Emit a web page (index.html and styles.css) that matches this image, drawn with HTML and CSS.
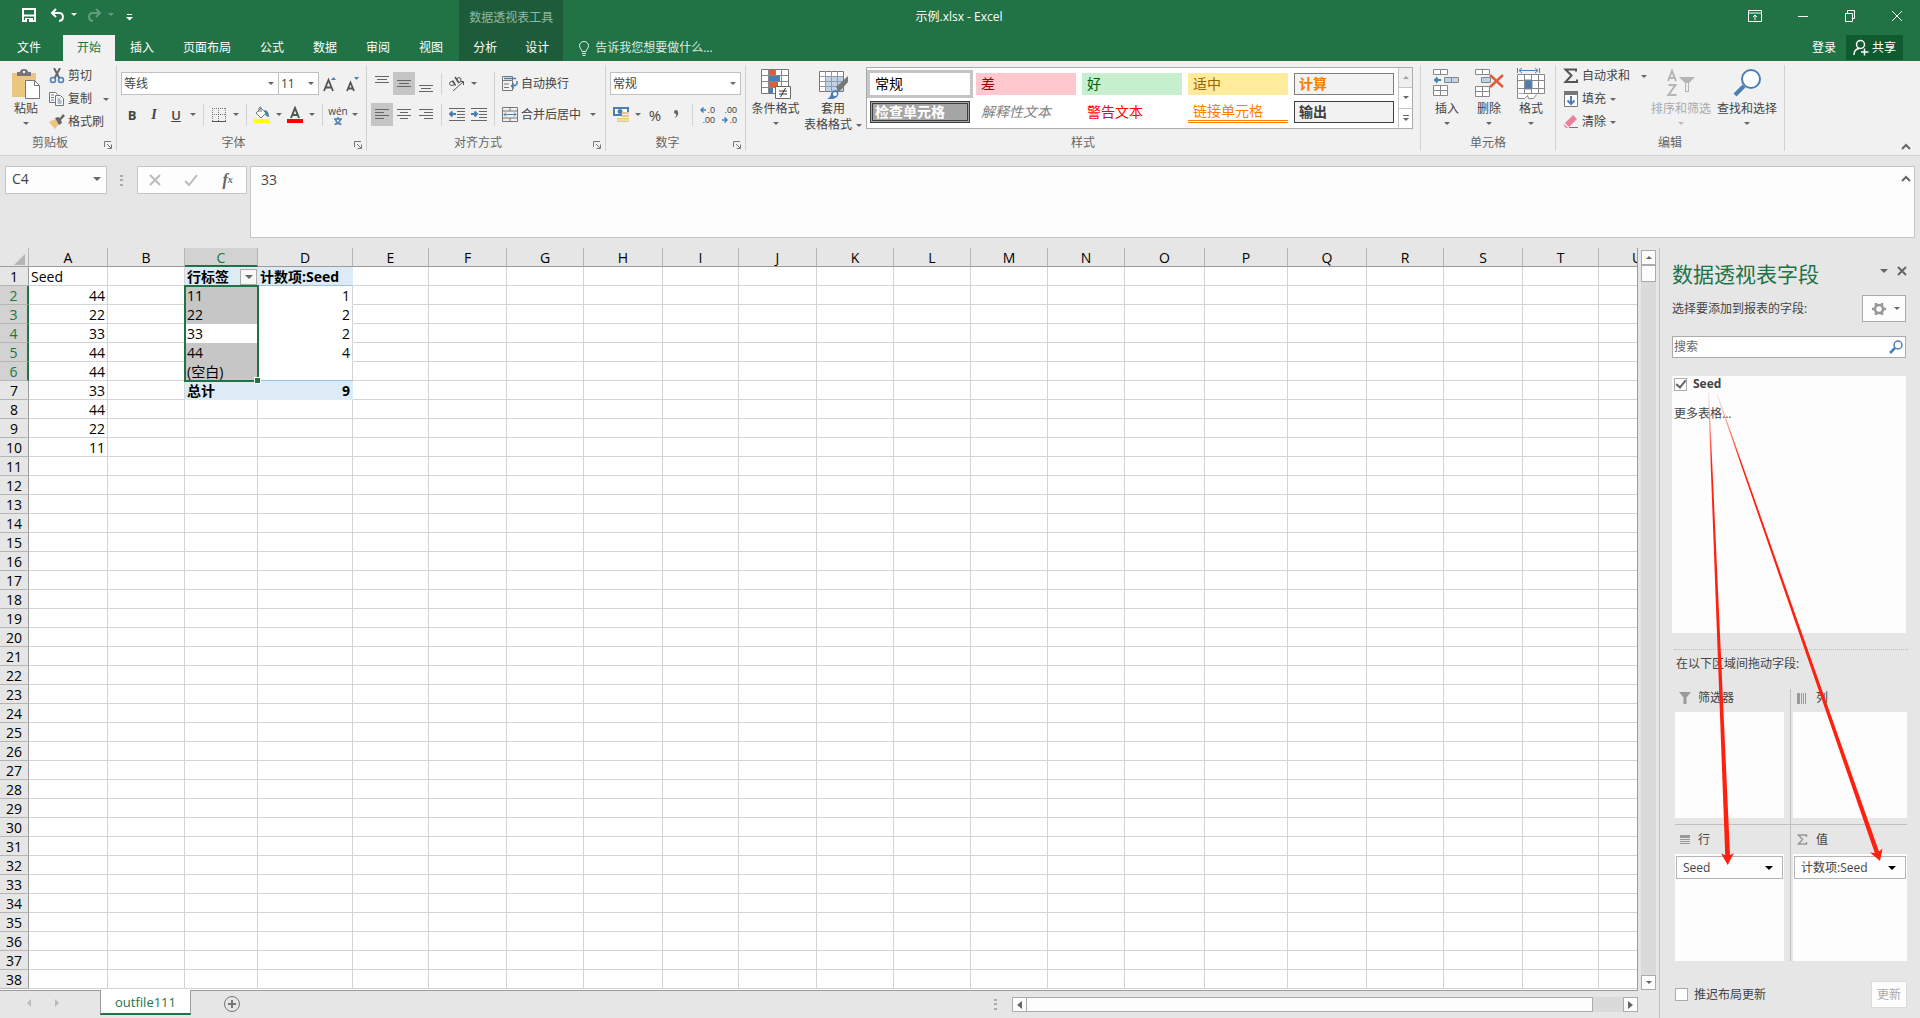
FILE: index.html
```html
<!DOCTYPE html>
<html lang="zh-CN">
<head>
<meta charset="utf-8">
<title>示例.xlsx - Excel</title>
<link rel="stylesheet" href="styles.css">
</head>
<body>
<header class="top">
  <div class="titlebar">
    <div class="quick">
      <button class="plain" aria-label="保存"><svg width="14" height="14"><path d="M1 1h12v12H1z" fill="none" stroke="#fff" stroke-width="2"/><path d="M1 6.500h12v2H1zM3 10h8v4H3z" fill="#fff"/><path d="M5 11h2v3H5z" fill="#217346"/></svg></button>
      <button class="plain undo" aria-label="撤销"><svg width="15" height="14"><path d="M6 1L2 5l4 4M2.500 5H9c5 0 5.500 7.500 0 8" fill="none" stroke="#fff" stroke-width="2"/></svg></button>
      <i class="caret light"></i>
      <button class="plain redo" aria-label="重做"><svg width="15" height="14"><path d="M9 1l4 4-4 4M12.500 5H6c-5 0-5.500 7.500 0 8" fill="none" stroke="#fff" stroke-width="2"/></svg></button>
      <i class="caret light dim"></i>
      <button class="plain custom" aria-label="自定义快速访问工具栏"><svg width="7" height="7"><path d="M1 .5h5" stroke="#fff"/><path d="M0 3h7L3.500 6.500z" fill="#fff"/></svg></button>
    </div>
    <h1>示例.xlsx - Excel</h1>
    <div class="window">
      <button class="plain" aria-label="功能区显示选项"><svg width="14" height="12" fill="none" stroke="#fff"><path d="M.5.5h13v11H.5zM.5 3h13M7 10V5M5 7l2-2 2 2"/></svg></button>
      <button class="plain" aria-label="最小化"><svg width="12" height="12"><path d="M1 6.500h10" stroke="#fff"/></svg></button>
      <button class="plain" aria-label="还原"><svg width="12" height="12" fill="none" stroke="#fff"><path d="M1.500 3.500h7v8h-7zM3.500 3V.5h7v8H9"/></svg></button>
      <button class="plain" aria-label="关闭"><svg width="12" height="12"><path d="M1 1l10 10M11 1L1 11" stroke="#fff"/></svg></button>
    </div>
  </div>
  <nav class="tabs">
    <button class="tab file">文件</button>
    <button class="tab active">开始</button>
    <button class="tab">插入</button>
    <button class="tab">页面布局</button>
    <button class="tab">公式</button>
    <button class="tab">数据</button>
    <button class="tab">审阅</button>
    <button class="tab">视图</button>
    <div class="context">
      <span class="context-title">数据透视表工具</span>
      <div class="context-tabs"><button class="tab">分析</button><button class="tab">设计</button></div>
    </div>
    <button class="plain tell"><svg width="10" height="15" fill="none" stroke="#e4efe8"><path d="M3 10.500C3 8.500.5 7.500.5 4.700a4.500 4.200 0 0 1 9 0C9.500 7.500 7 8.500 7 10.500zM3 12.500h4M3.500 14.500h3"/></svg>告诉我您想要做什么...</button>
    <button class="plain login">登录</button>
    <button class="share"><svg width="16" height="17" fill="none" stroke="#fff" stroke-width="1.500"><circle cx="7.500" cy="5.500" r="4"/><path d="M1 16c0-4 2-6 5-6.500M11.500 9.500v7M8 13h7.500"/></svg>共享</button>
  </nav>
</header>

<section class="ribbon">
  <div class="group clipboard">
    <div class="body">
      <button class="big"><svg width="30" height="30"><path d="M1 4h24v24H1z" fill="#ecc57f"/><path d="M6 3h3q0-3 4-3t4 3h3v4H6z" fill="#777"/><path d="M12 2h2v2h-2z" fill="#fff"/><path d="M14.500 11.500h9l5 5v13h-14z" fill="#fff" stroke="#777"/><path d="M23.500 11.500v5h5" fill="none" stroke="#777"/></svg><span>粘贴</span><i class="caret"></i></button>
      <div class="stack">
        <button class="small"><svg width="16" height="16" fill="none"><path d="M5 0l5.500 10.500M11 0L5.500 10.500" stroke="#666" stroke-width="2"/><circle cx="4" cy="12" r="2.500" stroke="#4a7fb5" stroke-width="1.500"/><circle cx="12" cy="12" r="2.500" stroke="#4a7fb5" stroke-width="1.500"/></svg>剪切</button>
        <button class="small"><svg width="16" height="16" fill="#fff" stroke="#777"><path d="M.5 1.500h6l2 2v8h-8z"/><path d="M6.500 4.500h5l3 3v7h-8z"/><path d="M2 4h3M2 6.500h3M2 9h3M8.500 8h3M8.500 10h4M8.500 12h4" stroke="#4a7fb5"/></svg>复制<i class="caret far"></i></button>
        <button class="small"><svg width="16" height="16"><path d="M0 8l6-3 4 5-4 5z" fill="#ecc57f"/><path d="M6 4l3-1 2 1 3-4 2 2-4 4 1 3-3 2z" fill="#666"/></svg>格式刷</button>
      </div>
    </div>
    <div class="label"><span>剪贴板</span><button class="plain launcher" aria-label="剪贴板选项"><svg width="8" height="8" fill="none" stroke="#777"><path d="M.5 6V.5H7M3 3l4 4M7.500 3.500v4h-4"/></svg></button></div>
  </div>

  <div class="group font">
    <div class="body rows">
      <div class="row">
        <label class="combo family"><select aria-label="字体"><option>等线</option></select><i class="caret"></i></label>
        <label class="combo size"><select aria-label="字号"><option>11</option></select><i class="caret"></i></label>
        <button class="ib" aria-label="增大字号"><svg width="16" height="16"><path d="M2 15L6.500 4 11 15M3.500 11.500h6" fill="none" stroke="#555" stroke-width="1.800"/><path d="M9 4l2.500-3L14 4z" fill="#4a7fb5"/></svg></button>
        <button class="ib" aria-label="减小字号"><svg width="16" height="16"><path d="M3 15L6.500 6.500 10 15M4 12.500h5" fill="none" stroke="#555" stroke-width="1.800"/><path d="M10 1l2.500 3L15 1z" fill="#4a7fb5"/></svg></button>
      </div>
      <div class="row">
        <button class="ib bold">B</button><button class="ib italic">I</button><button class="ib underline">U</button><button class="drop" aria-label="下划线选项"><i class="caret"></i></button>
        <span class="sep"></span>
        <button class="ib" aria-label="边框"><svg width="14" height="14" stroke="#777" fill="none"><path d="M.5 0v13M13.500 0v13M6.500 0v13M0 .5h14M0 6.500h14" stroke-dasharray="1 1"/><path d="M0 13.500h14" stroke="#555"/></svg></button><button class="drop" aria-label="边框选项"><i class="caret"></i></button>
        <span class="sep"></span>
        <button class="ib" aria-label="填充颜色"><svg width="18" height="18"><path d="M3 7l5-5 5 5-5 5z" fill="#fff" stroke="#777"/><path d="M6 6V2q2-3 2 1v3" fill="none" stroke="#777"/><path d="M11 4q5 0 5 7l-3-1z" fill="#4a7fb5"/><path d="M1 13h16v4H1z" fill="#ff0"/></svg></button><button class="drop" aria-label="填充颜色选项"><i class="caret"></i></button>
        <button class="ib" aria-label="字体颜色"><svg width="18" height="18"><path d="M5 12L9 2l4 10M6 9h6" fill="none" stroke="#555" stroke-width="2"/><path d="M1 13h16v4H1z" fill="#f00"/></svg></button><button class="drop" aria-label="字体颜色选项"><i class="caret"></i></button>
        <span class="sep"></span>
        <button class="ib pinyin"><span>wén</span><svg width="8" height="8" fill="none" stroke="#4a7fb5" stroke-width="1.500"><path d="M4 0v1.500M0 2h8M1.500 2.500q1 4 6 5M6.500 2.500q-1 4-6 5"/></svg></button><button class="drop" aria-label="拼音选项"><i class="caret"></i></button>
      </div>
    </div>
    <div class="label"><span>字体</span><button class="plain launcher" aria-label="字体选项"><svg width="8" height="8" fill="none" stroke="#777"><path d="M.5 6V.5H7M3 3l4 4M7.500 3.500v4h-4"/></svg></button></div>
  </div>

  <div class="group align">
    <div class="body">
      <div class="rows">
        <div class="row">
          <button class="ib" aria-label="顶端对齐"><svg width="14" height="16" stroke="#666"><path d="M0 .5h14M2 3.500h10M0 6.500h14"/></svg></button>
          <button class="ib on" aria-label="垂直居中"><svg width="14" height="16" stroke="#666"><path d="M0 4.500h14M2 7.500h10M0 10.500h14"/></svg></button>
          <button class="ib" aria-label="底端对齐"><svg width="14" height="16" stroke="#666"><path d="M0 9.500h14M2 12.500h10M0 15.500h14"/></svg></button>
          <span class="sep"></span>
          <button class="ib" aria-label="方向"><svg width="18" height="16" fill="none" stroke="#555"><ellipse cx="4" cy="7.500" rx="2.500" ry="2"/><path d="M4.500 4.500l3 5M7 1l4 6" stroke-width="1.500"/><ellipse cx="11" cy="4" rx="2" ry="2.500"/><path d="M5 15L15 6M12 5.500h3.500V9"/></svg></button><button class="drop" aria-label="方向选项"><i class="caret"></i></button>
        </div>
        <div class="row">
          <button class="ib on" aria-label="左对齐"><svg width="14" height="11" stroke="#666"><path d="M0 .5h14M0 3.500h9M0 6.500h14M0 9.500h9"/></svg></button>
          <button class="ib" aria-label="居中"><svg width="14" height="11" stroke="#666"><path d="M0 .5h14M3 3.500h8M0 6.500h14M3 9.500h8"/></svg></button>
          <button class="ib" aria-label="右对齐"><svg width="14" height="11" stroke="#666"><path d="M0 .5h14M5 3.500h9M0 6.500h14M5 9.500h9"/></svg></button>
          <span class="sep"></span>
          <button class="ib" aria-label="减少缩进量"><svg width="16" height="13" stroke="#666"><path d="M0 .5h16M8 3.500h8M8 6.500h8M8 9.500h8M0 12.500h16"/><path d="M7 6H1M3.500 3.500L1 6l2.500 2.500" fill="none" stroke="#4a7fb5" stroke-width="2"/></svg></button>
          <button class="ib" aria-label="增加缩进量"><svg width="16" height="13" stroke="#666"><path d="M0 .5h16M8 3.500h8M8 6.500h8M8 9.500h8M0 12.500h16"/><path d="M0 6h6M3.500 3.500L6 6 3.500 8.500" fill="none" stroke="#4a7fb5" stroke-width="2"/></svg></button>
        </div>
      </div>
      <span class="sep tall"></span>
      <div class="rows">
        <button class="small"><svg width="16" height="16" fill="none" stroke="#777"><path d="M.5.500h10v4H.5zM.5 4.500h10v10H.5zM2 8h5M2 11.500h5"/><path d="M2 2.500h12M15 5v2q0 3-5 3M12 7.500L9.500 10l2.500 2.500" stroke="#4a7fb5" stroke-width="1.500"/></svg>自动换行</button>
        <button class="small"><svg width="16" height="15" fill="none" stroke="#777"><path d="M.5.5h15v14H.5zM.5 4h15M.5 11h15M8 0v4M8 11v4"/><path d="M2 7.500h12M4 5.500l-2 2 2 2M12 5.500l2 2-2 2" stroke="#4a7fb5"/></svg>合并后居中<i class="caret mid"></i></button>
      </div>
    </div>
    <div class="label"><span>对齐方式</span><button class="plain launcher" aria-label="对齐选项"><svg width="8" height="8" fill="none" stroke="#777"><path d="M.5 6V.5H7M3 3l4 4M7.500 3.500v4h-4"/></svg></button></div>
  </div>

  <div class="group number">
    <div class="body rows">
      <label class="combo format"><select aria-label="数字格式"><option>常规</option></select><i class="caret"></i></label>
      <div class="row">
        <button class="ib" aria-label="会计数字格式"><svg width="16" height="16"><path d="M0 0h16v9H0z" fill="#4a7fb5"/><path d="M2 2h12v5H2z" fill="#fff"/><circle cx="7" cy="4.500" r="2.500" fill="#4a7fb5"/><path d="M9 5h7v10H4v-4h5z" fill="#ecc57f"/><path d="M9 7.500h7M9 10.500h7M4 13h12" stroke="#f1f1f1"/></svg></button><button class="drop" aria-label="货币选项"><i class="caret"></i></button>
        <button class="ib percent">%</button><button class="ib" aria-label="千位分隔样式"><svg width="6" height="9"><path d="M1 2a2 2 0 0 1 4 0q1 4-3.500 6Q4 5.500 3 4 1 4 1 2z" fill="#666"/></svg></button>
        <span class="sep"></span>
        <button class="ib decimals" aria-label="增加小数位数"><span><svg width="6" height="6" fill="none" stroke="#4a7fb5" stroke-width="1.500"><path d="M6 3H1M3.500 .5L1 3l2.500 2.500"/></svg>.0</span><span>.00</span></button>
        <button class="ib decimals" aria-label="减少小数位数"><span>.00</span><span><svg width="6" height="6" fill="none" stroke="#4a7fb5" stroke-width="1.500"><path d="M0 3h5M2.500 .5L5 3 2.500 5.500"/></svg>.0</span></button>
      </div>
    </div>
    <div class="label"><span>数字</span><button class="plain launcher" aria-label="数字选项"><svg width="8" height="8" fill="none" stroke="#777"><path d="M.5 6V.5H7M3 3l4 4M7.500 3.500v4h-4"/></svg></button></div>
  </div>

  <div class="group styles">
    <div class="body">
      <button class="big"><svg width="30" height="30"><path d="M.5.5h27v24H.5z" fill="#fff" stroke="#777"/><path d="M8 1h6v5H8zM8 13h9v5H8z" fill="#d9603b"/><path d="M8 7h11v5H8zM8 19h4v5H8z" fill="#4a7fb5"/><path d="M.5 6.500h27M.5 12.500h27M.5 18.500h27M7.500 0v25M14.500 0v7M20.500 0v25" fill="none" stroke="#888"/><path d="M14.500 17.500h15v12h-15z" fill="#fff" stroke="#666"/><path d="M18 22h8M18 25h8M24.500 19l-5 9" stroke="#333" fill="none"/></svg><span>条件格式</span><i class="caret"></i></button>
      <button class="big wide"><svg width="28" height="30"><path d="M.5 2.500h24v20H.5z" fill="#fff" stroke="#777"/><path d="M7 8h17v14H7z" fill="#bdd3ec"/><path d="M.5 7.500h24M.5 12.500h24M.5 17.500h24M6.500 2v21M12.500 2v21M18.500 2v21" fill="none" stroke="#999"/><path d="M17 18L29 7v6l-9 10z" fill="#777"/><path d="M8 30q4-2 4-6 3-5 7-2 2 6-5 8z" fill="#4a7fb5"/><circle cx="16" cy="25" r="2" fill="#fff"/></svg><span>套用</span><span class="second">表格格式<i class="caret"></i></span></button>
      <div class="gallery">
        <div class="swatches">
          <button class="sw normal">常规</button><button class="sw bad">差</button><button class="sw good">好</button><button class="sw neutral">适中</button><button class="sw calc">计算</button>
          <button class="sw verify">检查单元格</button><button class="sw explain">解释性文本</button><button class="sw warn">警告文本</button><button class="sw linked">链接单元格</button><button class="sw output">输出</button>
        </div>
        <div class="gallery-scroll">
          <button aria-label="上一行" disabled><i class="caret up"></i></button>
          <button aria-label="下一行"><i class="caret"></i></button>
          <button aria-label="其他"><i class="bar"></i><i class="caret"></i></button>
        </div>
      </div>
    </div>
    <div class="label"><span>样式</span></div>
  </div>

  <div class="group cells">
    <div class="body">
      <button class="big"><svg width="30" height="30" fill="#fff" stroke="#888"><path d="M1.500 .5h14v5h-14zM8.500 .5v5M1.500 16.500h14v10h-14zM8.500 16.500v10M1.500 21.500h14"/><path d="M12.500 8.500h14v5h-14zM19.500 8.500v5" fill="#bdd3ec"/><path d="M9 11H3M5.500 8.500L3 11 5.500 13.500" fill="none" stroke="#4a7fb5" stroke-width="2"/></svg><span>插入</span><i class="caret"></i></button>
      <button class="big"><svg width="30" height="30" fill="#fff" stroke="#888"><path d="M1.500 .5h14v5h-14zM8.500 .5v5M1.500 17.500h14v10h-14zM8.500 17.500v10M1.500 22.500h14"/><path d="M7.500 8.500h9v5h-9z" fill="#bdd3ec"/><path d="M16 6l13 12M29 6L16 18" stroke="#d9603b" stroke-width="2.500"/></svg><span>删除</span><i class="caret"></i></button>
      <button class="big"><svg width="30" height="30" fill="#fff" stroke="#888"><path d="M1.500 5.500h27v19h-27zM1.500 11.500h27M1.500 19.500h27M8.500 5.500v19M15.500 5.500v19M22.500 5.500v19"/><path d="M9 11h7v9H9z" fill="#4a7fb5"/><path d="M1.500 24.500v5h7l3-3 1 3h5l3-4"/><path d="M1.500-1v5M23.500-1v5M3 1.500h19M6-1L3 1.500 6 4M19-1l3 2.500L19 4" stroke="#4a7fb5" fill="none"/></svg><span>格式</span><i class="caret"></i></button>
    </div>
    <div class="label"><span>单元格</span></div>
  </div>

  <div class="group editing">
    <div class="body">
      <div class="stack">
        <button class="small"><svg width="16" height="16"><path d="M13 3.500V1.500H2.500L8.500 7.500l-6 6.500H14v-2.500" fill="none" stroke="#555" stroke-width="2"/></svg>自动求和<i class="caret far"></i></button>
        <button class="small"><svg width="16" height="16"><path d="M1.500.5h13v15h-13z" fill="#fff" stroke="#777"/><path d="M1 0h14v4H1z" fill="#777"/><path d="M8 5v8M4.500 9.500L8 13l3.500-3.500" fill="none" stroke="#4a7fb5" stroke-width="2"/></svg>填充<i class="caret near"></i></button>
        <button class="small"><svg width="16" height="16"><path d="M2 9L10 1l4 4-8 8z" fill="#e8819a"/><path d="M1 10l4 4H3l-2-2z" fill="#e8819a"/><path d="M6 13.500h9" stroke="#777"/></svg>清除<i class="caret near"></i></button>
      </div>
      <button class="big sort" disabled><svg width="30" height="30" fill="none" stroke="#b5b5b5" stroke-width="2"><path d="M2 12L6 2l4 10M3.500 9h5M2.500 16h7l-7 10h8"/><path d="M13 8h16l-6 6v9h-4v-9z" fill="#b5b5b5" stroke="none"/><path d="M21 14v8" stroke="#eee"/></svg><span>排序和筛选</span><i class="caret"></i></button>
      <button class="big find"><svg width="30" height="30" fill="none" stroke="#4a7fb5"><circle cx="19" cy="10" r="9" stroke-width="2" fill="#fff"/><path d="M12 17L3 26" stroke-width="4"/></svg><span>查找和选择</span><i class="caret"></i></button>
    </div>
    <div class="label"><span>编辑</span></div>
  </div>
  <button class="plain collapse" aria-label="折叠功能区"><svg width="10" height="8"><path d="M1 6l4-4 4 4" fill="none" stroke="#666" stroke-width="2"/></svg></button>
</section>

<section class="formula">
  <div class="namebox"><input aria-label="名称框" value="C4"><i class="caret big-caret"></i></div>
  <span class="dots"></span>
  <div class="fx">
    <button class="plain" aria-label="取消"><svg width="12" height="12"><path d="M1 1l10 10M11 1L1 11" stroke="#bbb" stroke-width="2"/></svg></button>
    <button class="plain" aria-label="输入"><svg width="14" height="12"><path d="M1 7l4 4 8-10" fill="none" stroke="#bbb" stroke-width="2"/></svg></button>
    <button class="plain fn">f<sub>x</sub></button>
  </div>
  <div class="entry">
    <textarea aria-label="编辑栏">33</textarea>
    <button class="plain" aria-label="折叠编辑栏"><svg width="10" height="8"><path d="M1 6l4-4 4 4" fill="none" stroke="#666" stroke-width="2"/></svg></button>
  </div>
</section>

<main>
  <div class="workbook">
    <div class="sheet-row">
      <div class="sheet">
        <table id="grid"></table>
        <div class="selection"></div>
      </div>
      <div class="vscroll">
        <button aria-label="向上滚动"><i class="caret up"></i></button>
        <div class="thumb"></div>
        <button class="end" aria-label="向下滚动"><i class="caret"></i></button>
      </div>
    </div>
    <footer class="bottom">
      <button class="plain nav" aria-label="上一个工作表"><svg width="6" height="8"><path d="M5 0v8L1 4z" fill="#bbb"/></svg></button>
      <button class="plain nav" aria-label="下一个工作表"><svg width="6" height="8"><path d="M1 0v8l4-4z" fill="#bbb"/></svg></button>
      <button class="sheet-tab">outfile111</button>
      <button class="plain add" aria-label="新工作表"><svg width="16" height="16" fill="none" stroke="#777"><circle cx="8" cy="8" r="7.500"/><path d="M8 4v8M4 8h8" stroke-width="2"/></svg></button>
      <span class="dots"></span>
      <div class="hscroll">
        <button aria-label="向左滚动"><svg width="5" height="8"><path d="M5 0v8L0 4z" fill="#666"/></svg></button>
        <div class="thumb"></div>
        <button class="end" aria-label="向右滚动"><svg width="5" height="8"><path d="M0 0v8l5-4z" fill="#666"/></svg></button>
      </div>
    </footer>
  </div>

  <aside class="pane">
    <div class="pane-head"><h2>数据透视表字段</h2><button class="plain" aria-label="任务窗格选项"><i class="caret big-caret"></i></button><button class="plain" aria-label="关闭窗格"><svg width="10" height="10"><path d="M1 1l8 8M9 1L1 9" stroke="#666" stroke-width="2"/></svg></button></div>
    <div class="pane-sub"><span>选择要添加到报表的字段:</span><button class="gear" aria-label="工具"><svg width="14" height="14" fill="none" stroke="#999"><circle cx="7" cy="7" r="4" stroke-width="2.500"/><path d="M4 1v3M10 1v3M4 10v3M10 10v3M0 7h3M11 7h3" stroke-width="2.500"/></svg><i class="caret"></i></button></div>
    <div class="search"><input type="text" aria-label="搜索" placeholder="搜索"><svg width="14" height="14" fill="none" stroke="#4a7fb5"><circle cx="9" cy="5" r="4" stroke-width="1.500"/><path d="M6 8l-5 5" stroke-width="2.500"/></svg></div>
    <div class="fields">
      <label class="check strong"><input type="checkbox" checked>Seed</label>
      <a href="#">更多表格...</a>
    </div>
    <p class="hint">在以下区域间拖动字段:</p>
    <div class="areas">
      <section class="area left">
        <h3><svg width="12" height="12"><path d="M0 0h12L7.500 5.500V12h-3V5.500z" fill="#999"/></svg>筛选器</h3>
        <div class="well"></div>
      </section>
      <section class="area right">
        <h3><svg width="12" height="11"><path d="M0 0h3v11H0zM4 0h1v11H4zM6 0h1v11H6zM8 0h1v11H8z" fill="#999"/></svg>列</h3>
        <div class="well"></div>
      </section>
      <section class="area left lower">
        <h3><svg width="12" height="10"><path d="M1 0h10v3H1zM1 4h10v1H1zM1 6h10v1H1zM1 8h10v1H1z" fill="#999"/></svg>行</h3>
        <div class="well"><button class="chip">Seed<i class="caret black"></i></button></div>
      </section>
      <section class="area right lower">
        <h3><svg width="12" height="11"><path d="M9.500 3V1h-8l4 4.500-4 4.500h8V8" fill="none" stroke="#999" stroke-width="1.500"/></svg>值</h3>
        <div class="well"><button class="chip">计数项:Seed<i class="caret black"></i></button></div>
      </section>
    </div>
    <div class="pane-foot"><label class="check"><input type="checkbox">推迟布局更新</label><button class="update" disabled>更新</button></div>
    <svg class="arrows" width="200" height="490">
      <defs><linearGradient id="fade" gradientUnits="userSpaceOnUse" x1="0" y1="5" x2="0" y2="85"><stop offset="0" stop-color="#ff2010" stop-opacity="0"/><stop offset="1" stop-color="#ff2010"/></linearGradient></defs>
      <path d="M8 12L25.200 475 21 473.500 27.700 485 34 473 30 475 9 12z" fill="url(#fade)"/>
      <path d="M16.500 14L174.800 473 170 472.500 180 481 182.500 468.500 179 471.500 17.500 14z" fill="url(#fade)"/>
    </svg>
  </aside>
</main>
<script src="grid.js"></script>
</body>
</html>
```
FILE: styles.css
```css
* { box-sizing: border-box; }
body {
  margin: 0; min-height: 100vh; display: flex; flex-direction: column;
  font: 12px/16px "Open Sans", "Noto Sans CJK SC", sans-serif; color: #444; background: #e6e6e6;
}
button, input, select, textarea { font: inherit; color: inherit; margin: 0; padding: 0; }
button { border: 0; background: none; white-space: nowrap; }
svg { display: block; flex: none; }
h1, h2, h3, p { margin: 0; font-weight: 400; }
.plain { display: flex; align-items: center; justify-content: center; }
.caret { display: block; flex: none; width: 0; height: 0; border: 3px solid transparent; border-top-color: #666; border-bottom: 0; }
.caret.up { border-bottom: 3px solid #666; border-top: 0; }
.caret.light { border-top-color: #fff; }
.caret.dim { opacity: .3; }
.caret.black { border-width: 4px 4px 0; border-top-color: #000; }
.big-caret { border-width: 4px 4px 0; }

/* title bar and tabs */
.top { background: #217346; color: #fff; }
.titlebar { height: 35px; display: grid; grid-template-columns: 1fr auto 1fr; align-items: center; }
.titlebar h1 { font-size: 12px; line-height: 18px; padding: 0 2px 2px 0; }
.quick { display: flex; align-items: center; padding: 0 0 6px 22px; }
.undo { margin: 0 6px 0 14px; }
.redo { margin: 0 6px 0 10px; opacity: .3; }
.custom { margin-left: 12px; padding-top: 6px; }
.window { display: flex; justify-content: flex-end; gap: 35px; padding: 0 17px 4px 0; }
.tabs { display: flex; height: 26px; align-items: stretch; }
.tab { height: 26px; padding: 0 14px; margin-right: 1px; color: #fff; line-height: 24px; }
.tab.file { padding: 0 16px 0 17px; margin-right: 6px; }
.tab.active { background: #f1f1f1; color: #217346; }
.context { background: #1c5c3a; margin: -35px 0 0 1px; display: flex; flex-direction: column; justify-content: space-between; }
.context-title { padding: 10px 10px 0; color: #91b8a1; }
.context-tabs { display: flex; }
.context .tab { margin: 0; }
.tell { margin: 0 auto 0 16px; gap: 6px; color: #dcebe2; }
.login { margin-right: 10px; }
.share { display: flex; align-items: center; gap: 3px; height: 25px; padding: 0 7px; margin-right: 17px; background: #0f5a2e; color: #fff; }

/* ribbon */
.ribbon { display: flex; background: #f1f1f1; padding: 4px 0; border-bottom: 1px solid #d2d2d2; height: 95px; }
.group { display: flex; flex-direction: column; flex: none; border-right: 1px solid #d2d2d2; height: 86px; }
.body { display: flex; height: 72px; align-items: flex-start; }
.label { display: flex; line-height: 16px; color: #666; }
.label span { flex: 1; text-align: center; }
.launcher { width: 16px; padding-top: 4px; }
.stack { display: flex; flex-direction: column; gap: 3px; padding-top: 1px; }
.small { display: flex; align-items: center; gap: 3px; height: 20px; }
.caret.far { margin-left: 8px; }
.caret.near { margin-left: 1px; }
.caret.mid { margin-left: 6px; }
.big { display: flex; flex-direction: column; align-items: center; padding-top: 4px; }
.big svg { height: 30px; margin-bottom: 2px; overflow: visible; }
.big > .caret { margin-top: 5px; }
.big:disabled { color: #aaa; }
.big:disabled .caret { border-top-color: #bbb; }
.second { display: flex; align-items: center; gap: 4px; }
.rows { display: flex; flex-direction: column; padding-top: 7px; gap: 8px; }
.rows .small { height: 23px; padding-left: 3px; }
.row { display: flex; align-items: center; height: 23px; }
.ib { width: 22px; height: 23px; display: flex; align-items: center; justify-content: center; }
.ib.on { background: #c5c5c5; }
.drop { width: 11px; height: 23px; display: flex; align-items: center; justify-content: center; }
.sep { width: 1px; height: 22px; background: #d2d2d2; margin: 0 4px 0 5px; }
.align .sep { margin-left: 4px; }
.sep.tall { height: 54px; margin-top: 7px; }
.combo { display: flex; align-items: center; height: 23px; border: 1px solid #c0c0c0; background: #fff; padding: 0 4px 0 2px; }
.combo select { flex: 1; min-width: 0; border: 0; background: none; appearance: none; }
.clipboard { width: 117px; }
.clipboard .big { width: 38px; margin: 0 4px 0 7px; }
.font { width: 250px; }
.font .body, .align .body, .number .body { padding-left: 4px; }
.font .body, .number .body { padding-left: 4px; }
.family { width: 158px; }
.size { width: 41px; margin-left: -1px; }
.bold { font-weight: 700; font-size: 13px; }
.italic { font: italic 700 14px "Liberation Serif", serif; }
.underline { font-weight: 600; font-size: 13px; text-decoration: underline; }
.pinyin { flex-direction: column; font-size: 10px; line-height: 12px; }
.align { width: 239px; }
.align .body .rows { align-items: flex-start; }
.number { width: 140px; }
.format { width: 131px; }
.percent { font-size: 15px; padding-left: 2px; }
.decimals { flex-direction: column; font: 9px/10px "Liberation Sans", sans-serif; align-items: flex-end; padding-right: 4px; }
.decimals span { display: flex; align-items: center; gap: 1px; }
.styles { width: 675px; }
.styles .big { width: 55px; margin-left: 2px; }
.styles .wide { width: 60px; margin-left: 0; }
.gallery { display: flex; height: 62px; margin: 2px 0 0 3px; border: 1px solid #ababab; background: #fff; }
.swatches { display: grid; grid-template-columns: repeat(5, 100px); grid-auto-rows: 22px; gap: 6px; padding: 5px 4px 0 3px; }
.sw { text-align: left; padding-left: 5px; font-size: 14px; line-height: 18px; color: #000; }
.normal { outline: 3px solid #c5c5c5; }
.bad { background: #ffc7ce; color: #9c0006; }
.good { background: #c6efce; color: #006100; }
.neutral { background: #ffeb9c; color: #9c6500; }
.calc { background: #f2f2f2; color: #fa7d00; border: 1px solid #7f7f7f; font-weight: 700; padding-left: 4px; }
.verify { background: #a5a5a5; color: #fff; font-weight: 700; border: 3px double #3f3f3f; padding-left: 2px; line-height: 14px; }
.explain { color: #7f7f7f; font-style: italic; }
.warn { color: #f00; }
.linked { color: #fa7d00; border-bottom: 3px double #ff8001; line-height: 16px; }
.output { background: #f2f2f2; color: #3f3f3f; border: 1px solid #3f3f3f; font-weight: 700; padding-left: 4px; }
.gallery-scroll { display: flex; flex-direction: column; width: 14px; border-left: 1px solid #c5c5c5; }
.gallery-scroll button { flex: 1; display: flex; flex-direction: column; gap: 2px; align-items: center; justify-content: center; }
.gallery-scroll button + button { border-top: 1px solid #c5c5c5; }
.gallery-scroll button:disabled { background: #e6e6e6; opacity: .6; }
.bar { width: 6px; height: 1px; background: #666; }
.cells { width: 135px; }
.cells .body { padding-left: 5px; }
.cells .big { width: 42px; }
.editing { width: 229px; }
.editing .body { padding-left: 7px; }
.editing .stack { width: 85px; }
.editing .big { width: 66px; }
.collapse { margin: auto 9px 0 auto; width: 10px; height: 8px; }

/* formula bar */
.formula { display: flex; align-items: flex-start; padding: 10px 5px 10px; font-size: 14px; }
.namebox, .fx, .entry { display: flex; align-items: center; border: 1px solid #c5c5c5; background: #fdfdfd; height: 28px; }
.namebox { width: 102px; padding: 0 5px 2px 6px; }
.namebox input { flex: 1; min-width: 0; border: 0; background: none; }
.dots { width: 3px; height: 11px; border-top: 2px solid #aaa; border-bottom: 2px solid #aaa; position: relative; }
.dots::after { content: ""; position: absolute; left: 0; top: 2px; width: 3px; height: 2px; background: #aaa; }
.formula .dots { margin: 9px 14px 0 13px; }
.fx { width: 110px; justify-content: space-around; }
.fn { font: italic 700 16px/16px "Liberation Serif", serif; color: #666; width: 14px; }
.fn sub { font-size: 10px; }
.entry { flex: 1; height: 72px; margin-left: 3px; align-items: flex-start; padding: 3px 3px 0 10px; }
.entry textarea { flex: 1; height: 60px; border: 0; background: none; resize: none; line-height: 20px; }
.entry button { margin-top: 5px; }

/* worksheet */
main { flex: 1; display: flex; align-items: stretch; }
.workbook { flex: 1; min-width: 0; display: flex; flex-direction: column; }
.sheet-row { flex: 1; display: flex; }
.sheet { flex: 1; min-width: 0; position: relative; overflow: hidden; border-right: 1px solid #9b9b9b; margin-right: 3px; background: #fff; }
#grid { border-collapse: separate; border-spacing: 0; table-layout: fixed; width: 1676px; font-size: 14px; color: #000; line-height: 16px; }
#grid td, #grid th { height: 19px; padding: 2px 2px 0; border: 0 solid #d4d4d4; border-width: 0 1px 1px 0; font-weight: 400; white-space: nowrap; overflow: hidden; }
#grid th { background: #e6e6e6; padding: 2px 0 0; text-align: center; }
#grid thead th { border-color: #b5b5b5; border-bottom-color: #9b9b9b; }
#grid tbody th { border-color: #b5b5b5; border-right-color: #9b9b9b; }
#grid thead th.picked { background: #d2d2d2; color: #217346; border-bottom: 2px solid #217346; line-height: 15px; }
#grid tbody th.picked { background: #d2d2d2; color: #217346; border-right: 2px solid #217346; }
#grid .corner svg { margin: 2px 3px 0 auto; }
#grid td.num { text-align: right; }
#grid td.pivot { border-bottom-color: transparent; }
#grid td.pivot.c { border-right-color: transparent; }
#grid td.shade { background: #c6c6c6; }
#grid td.head { background: #ddebf7; font-weight: 700; border-color: #ddebf7; }
#grid td.rule { border-bottom-color: #9bc2e6; }
.head-cell { display: flex; align-items: center; justify-content: space-between; height: 16px; }
.filter { width: 17px; height: 16px; display: flex; align-items: center; justify-content: center; border: 1px solid #ababab; background: #f7f7f7; margin-right: -2px; }
.filter .caret { border-width: 4px 4px 0; }
.selection { position: absolute; left: 184px; top: 37px; width: 75px; height: 97px; border: 2px solid #217346; }
.selection::after { content: ""; position: absolute; right: -3px; bottom: -3px; width: 5px; height: 5px; background: #217346; outline: 1px solid #fff; }
.vscroll { width: 15px; margin: 2px 3px 0 0; display: flex; flex-direction: column; background: #dadada; }
.vscroll button, .hscroll button, .thumb { background: #fdfdfd; border: 1px solid #ababab; display: flex; align-items: center; justify-content: center; }
.vscroll button { height: 15px; }
.vscroll .thumb { height: 17px; }
.vscroll .end { margin-top: auto; }

/* sheet tabs */
.bottom { display: flex; height: 28px; margin-right: 21px; border-top: 1px solid #9b9b9b; align-items: flex-start; }
.nav { width: 6px; height: 24px; margin-left: 22px; }
.nav:first-child { margin-left: 26px; }
.sheet-tab { width: 91px; height: 25px; margin: -1px 33px 0 40px; background: #fff; border: solid #9b9b9b; border-width: 0 1px; border-bottom: 2px solid #217346; color: #217346; font-size: 13px; position: relative; }
.add { height: 16px; margin-top: 5px; }
.bottom .dots { margin: 8px 15px 0 auto; }
.hscroll { display: flex; flex: 0 0 626px; height: 15px; margin-top: 6px; background: #dadada; }
.hscroll button { width: 15px; }
.hscroll .thumb { width: 567px; margin-left: -1px; }
.hscroll .end { margin-left: auto; }

/* pivot field pane */
.pane { position: relative; width: 261px; display: flex; flex-direction: column; border-left: 1px solid #c0c0c0; padding: 14px 14px 10px 12px; }
.pane-head { display: flex; align-items: center; height: 26px; gap: 10px; }
.pane-head h2 { flex: 1; font-size: 21px; line-height: 24px; padding-bottom: 2px; color: #217346; }
.pane-head button { margin-top: -8px; margin-right: -1px; }
.pane-sub { display: flex; align-items: center; justify-content: space-between; margin-top: 7px; height: 27px; }
.gear { display: flex; align-items: center; justify-content: space-between; width: 44px; height: 27px; padding: 0 5px 0 9px; border: 1px solid #ababab; background: #fdfdfd; }
.search { display: flex; align-items: center; height: 22px; margin-top: 14px; padding: 0 2px 0 1px; border: 1px solid #ababab; background: #fff; }
.search input { flex: 1; min-width: 0; border: 0; background: none; outline: 0; }
.search input::placeholder { color: #666; opacity: 1; }
.fields { flex: 1; margin-top: 18px; padding: 0 2px; background: #fdfdfd; }
.fields a { display: block; margin-top: 14px; color: #444; text-decoration: none; }
.check { display: flex; align-items: center; gap: 6px; }
.strong { font-weight: 700; }
.check input { appearance: none; width: 13px; height: 13px; border: 1px solid #ababab; background: #fff; display: flex; align-items: center; justify-content: center; }
.check input:checked::after { content: ""; width: 4px; height: 8px; border: solid #666; border-width: 0 2px 2px 0; transform: rotate(40deg); margin-top: -2px; }
.hint { margin: 16px -2px 0 2px; padding: 6px 0 18px 2px; border-top: 1px dotted #bbb; line-height: 15px; }
.areas { display: grid; grid-template-columns: 1fr 1fr; margin: 0 -1px 0 3px; }
.area h3 { display: flex; align-items: center; gap: 7px; height: 23px; padding: 0 0 5px 4px; font-size: 12px; }
.area .well { height: 106px; background: #fdfdfd; }
.area.left { border-right: 1px solid #c0c0c0; padding-bottom: 6px; }
.left .well { margin-right: 6px; }
.right .well { margin-left: 2px; }
.area.right h3 { padding-left: 6px; }
.area.lower { border-top: 1px solid #c0c0c0; padding-bottom: 0; }
.area.lower h3 { height: 29px; padding-bottom: 0; }
.area.lower .well { padding: 2px 1px; height: 107px; }
.chip { display: flex; align-items: center; justify-content: space-between; width: 100%; height: 23px; padding: 0 9px 0 6px; border: 1px solid #b5b5b5; background: #fdfdfd; }
.pane-foot { display: flex; align-items: center; justify-content: space-between; height: 27px; margin: 20px -1px 0 3px; }
.update { width: 36px; height: 27px; border: 1px solid #dcdcdc; background: #fdfdfd; color: #aaa; }
.arrows { position: absolute; left: 40px; top: 132px; pointer-events: none; }
```
FILE: grid.js
```js
// Column letters with their widths, then the cells that hold a value.
const columns = { A: 79, B: 77, C: 73, D: 95, E: 76, F: 78, G: 77, H: 79, I: 76, J: 78, K: 77, L: 77, M: 77, N: 77, O: 80, P: 83, Q: 79, R: 77, S: 79, T: 76, U: 77 };
const cells = {
  A1: ["Seed"], A2: ["44", "num"], A3: ["22", "num"], A4: ["33", "num"], A5: ["44", "num"], A6: ["44", "num"],
  A7: ["33", "num"], A8: ["44", "num"], A9: ["22", "num"], A10: ["11", "num"],
  C1: ['<div class="head-cell">行标签<button class="filter" aria-label="筛选"><i class="caret"></i></button></div>', "head rule"],
  D1: ["计数项:Seed", "head rule"],
  C2: ["11", "pivot c shade"], C3: ["22", "pivot c shade"], C4: ["33", "pivot c"], C5: ["44", "pivot c shade"], C6: ["(空白)", "pivot c shade"],
  D2: ["1", "num pivot"], D3: ["2", "num pivot"], D4: ["2", "num pivot"], D5: ["4", "num pivot"], D6: ["", "pivot rule"],
  C7: ["总计", "head"], D7: ["9", "head num"]
};
const letters = Object.keys(columns);
let html = '<colgroup><col style="width:29px">' + letters.map(l => `<col style="width:${columns[l]}px">`).join("") + "</colgroup>";
html += '<thead><tr><th class="corner"><svg width="11" height="11"><path d="M11 0v11H0z" fill="#b5b5b5"/></svg></th>' +
  letters.map(l => `<th class="${l === "C" ? "picked" : ""}">${l}</th>`).join("") + "</tr></thead><tbody>";
for (let r = 1; r <= 38; r++) {
  html += `<tr><th class="${r > 1 && r < 7 ? "picked" : ""}">${r}</th>` + letters.map(l => {
    const [text, cls] = cells[l + r] || ["", ""];
    return `<td class="${cls || ""}">${text}</td>`;
  }).join("") + "</tr>";
}
document.getElementById("grid").innerHTML = html + "</tbody>";
```
